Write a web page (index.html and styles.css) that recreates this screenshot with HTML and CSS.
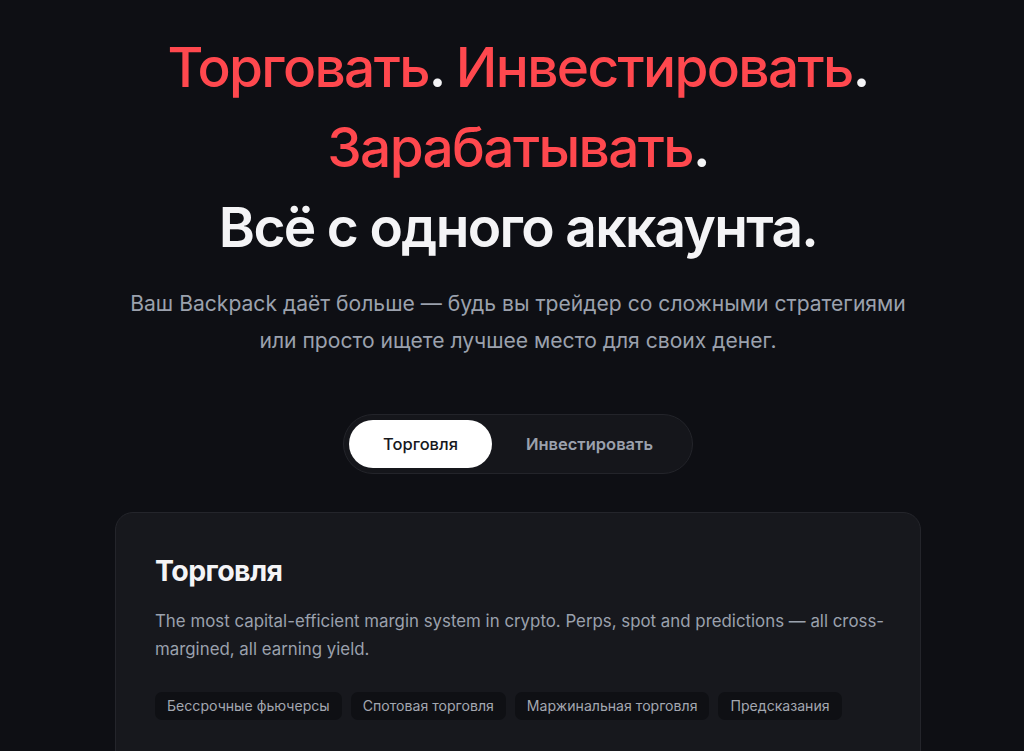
FILE: index.html
```html
<!DOCTYPE html>
<html lang="ru">
<head>
    <meta charset="utf-8">
    <title>Backpack</title>
    <link rel="stylesheet" href="styles.css">
</head>
<body>
    <section class="hero">
        <h1 class="hero_title">
            <span class="accent">Торговать</span>. <span class="accent">Инвестировать</span>.<br>
            <span class="accent">Зарабатывать</span>.<br>
            Всё с одного аккаунта.
        </h1>
        <p class="hero_lead">
            Ваш Backpack даёт больше — будь вы трейдер со сложными стратегиями<br>
            или просто ищете лучшее место для своих денег.
        </p>

        <div class="tabs">
            <button class="tab tab_active">Торговля</button>
            <button class="tab">Инвестировать</button>
        </div>

        <div class="card">
            <h2 class="card_title">Торговля</h2>
            <p class="card_text">The most capital-efficient margin system in crypto. Perps, spot and predictions — all cross-margined, all earning yield.</p>
            <div class="tags">
                <span class="tag">Бессрочные фьючерсы</span>
                <span class="tag">Спотовая торговля</span>
                <span class="tag">Маржинальная торговля</span>
                <span class="tag">Предсказания</span>
            </div>
        </div>
    </section>
</body>
</html>
```

FILE: styles.css
```css
html, body {
	margin: 0;
	padding: 0;
	background-color: #0e0f14;
	color: #f4f4f6;
	font-family: Inter, "Noto Sans", sans-serif;
}

.hero {
	display: flex;
	flex-direction: column;
	align-items: center;
	padding-top: 27px;
	padding-left: 12px;
}

.hero_title {
	margin: 0;
	font-size: 55px;
	line-height: 80px;
	font-weight: 600;
	letter-spacing: -0.03em;
	text-align: center;
	color: #f4f4f6;
}

.accent {
	color: #ff484e;
	font-weight: 500;
}

.hero_lead {
	margin: 18px 0 0 0;
	font-size: 21.1px;
	line-height: 37px;
	color: #9ba1ad;
	text-align: center;
}

.tabs {
	display: flex;
	margin-top: 55px;
	padding: 5px;
	border: 1px solid #23242a;
	border-radius: 999px;
	background-color: #15161b;
}

.tab {
	border: none;
	background: none;
	font-family: Inter, "Noto Sans", sans-serif;
	font-size: 16.5px;
	font-weight: 600;
	color: #9ba1ad;
	height: 48px;
	padding: 0 34px;
	border-radius: 999px;
}

.tab_active {
	background-color: #ffffff;
	color: #17181d;
	font-weight: 500;
}

.card {
	box-sizing: border-box;
	width: 806px;
	margin-top: 38px;
	padding: 40px 30px 60px 39px;
	border: 1px solid #24252b;
	border-radius: 18px;
	background-color: #17181d;
}

.card_title {
	margin: 0;
	font-size: 28.5px;
	line-height: 36px;
	font-weight: 700;
	letter-spacing: -0.02em;
	color: #f4f4f6;
}

.card_text {
	margin: 18px 0 0 0;
	font-size: 16.85px;
	line-height: 28px;
	color: #9ba1ad;
}

.tags {
	display: flex;
	flex-wrap: wrap;
	gap: 9px;
	margin-top: 29px;
}

.tag {
	padding: 0 12px;
	height: 28px;
	line-height: 28px;
	font-size: 14.1px;
	color: #a3a7b0;
	background-color: #0f1014;
	border-radius: 7px;
}
```
